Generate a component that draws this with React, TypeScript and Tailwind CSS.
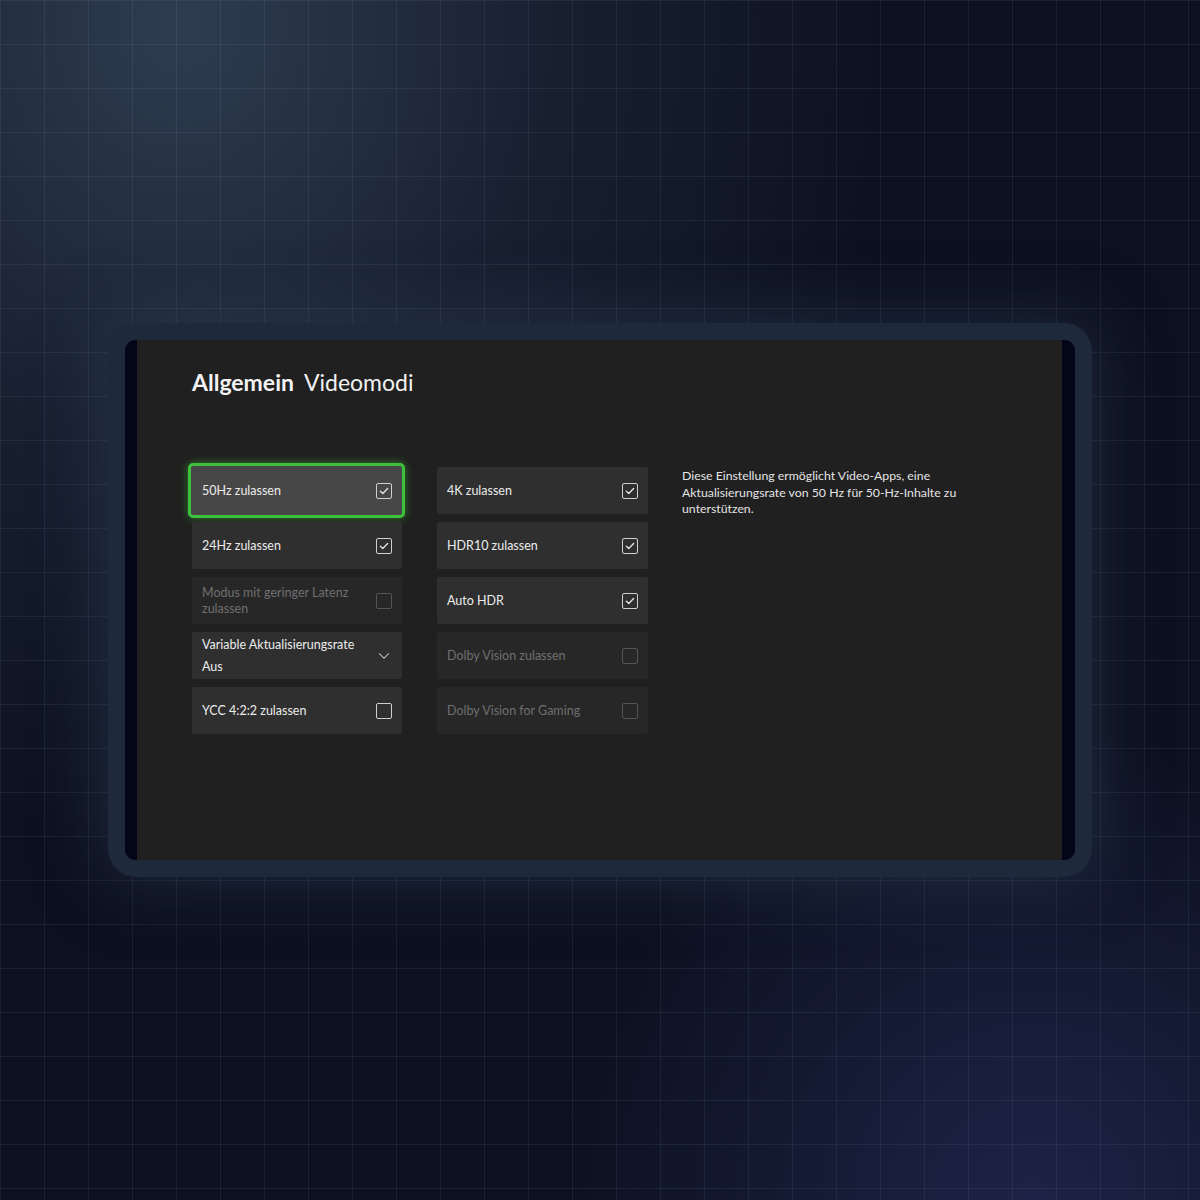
import { ChevronDown } from "lucide-react";

type Item = {
  label: string;
  sub?: string;
  checked?: boolean;
  disabled?: boolean;
  selected?: boolean;
  dropdown?: boolean;
};

const left: Item[] = [
  { label: "50Hz zulassen", checked: true, selected: true },
  { label: "24Hz zulassen", checked: true },
  { label: "Modus mit geringer Latenz zulassen", disabled: true },
  { label: "Variable Aktualisierungsrate", sub: "Aus", dropdown: true },
  { label: "YCC 4:2:2 zulassen" },
];

const right: Item[] = [
  { label: "4K zulassen", checked: true },
  { label: "HDR10 zulassen", checked: true },
  { label: "Auto HDR", checked: true },
  { label: "Dolby Vision zulassen", disabled: true },
  { label: "Dolby Vision for Gaming", disabled: true },
];

const CheckBox = ({ checked, disabled }: { checked?: boolean; disabled?: boolean }) => (
  <div
    className={`w-4 h-4 shrink-0 rounded-[2px] border-[1.5px] flex items-center justify-center ${
      disabled ? "border-[#555555]" : "border-[#cfcfcf]"
    }`}
  >
    {checked && (
      <svg width="12" height="12" viewBox="0 0 12 12" fill="none">
        <path d="M2.4 6.2l2.4 2.3 4.8-5" stroke="#e6e6e6" strokeWidth="1.3" strokeLinecap="round" strokeLinejoin="round" />
      </svg>
    )}
  </div>
);

const Tile = ({ item }: { item: Item }) => {
  const base = item.selected
    ? "-ml-[4px] -mr-[3px] -my-[4px] h-[55px] bg-[#474747] border-[3px] border-[#3ec23e] rounded-[5px] shadow-[0_0_8px_rgba(62,194,62,0.55)] pl-[11px] pr-[10px]"
    : `h-[47px] rounded-[2px] px-[10px] ${item.disabled ? "bg-[#272727]" : "bg-[#2f2f2f]"}`;
  return (
    <div className={`flex items-center justify-between ${base}`}>
      {item.dropdown ? (
        <div className="flex flex-col gap-[5px] text-[12.5px] leading-[17px] text-[#ececec]">
          <span>{item.label}</span>
          <span>{item.sub}</span>
        </div>
      ) : (
        <span
          className={`text-[12.5px] leading-[16px] pr-3 ${
            item.disabled ? "text-[#6f6f6f] max-w-[160px]" : "text-[#ececec]"
          }`}
        >
          {item.label}
        </span>
      )}
      {item.dropdown ? (
        <ChevronDown size={18} strokeWidth={1.4} className="text-[#d8d8d8] -mr-[1px]" />
      ) : (
        <CheckBox checked={item.checked} disabled={item.disabled} />
      )}
    </div>
  );
};

export default function App() {
  return (
    <div
      className="w-full min-h-[1200px] pt-[323px] bg-[#0c1120] bg-[linear-gradient(to_right,rgba(148,163,184,0.1)_1px,transparent_1px),linear-gradient(to_bottom,rgba(148,163,184,0.1)_1px,transparent_1px),radial-gradient(ellipse_at_15%_2%,#2f3d50_0%,rgba(47,61,80,0.35)_25%,rgba(12,17,32,0)_50%),radial-gradient(circle_at_86%_100%,#1d2346_0%,rgba(29,35,70,0)_30%)] bg-[size:44px_44px,44px_44px,100%_100%,100%_100%] bg-[position:0_0,0_0,0_0,0_0]"
      style={{ fontFamily: "Lato, 'Noto Sans', sans-serif" }}
    >
      <div className="mx-auto w-[984px] h-[554px] rounded-[28px] bg-[#1e293b] p-[17px] shadow-[0_0_70px_rgba(51,65,85,0.55)]">
        <div className="h-[520px] rounded-[10px] bg-[#020617] pl-[12px] pr-[13px] flex">
          <div className="flex-1 bg-[#202020] pl-[55px] pt-[26px]">
            <h1 className="flex gap-[10px] text-[23px] leading-[32px] text-[#f2f2f2]">
              <span className="font-bold">Allgemein</span>
              <span className="font-normal">Videomodi</span>
            </h1>
            <div className="mt-[69px] flex items-start">
              <div className="w-[210px] flex flex-col gap-[8px]">
                {left.map((it) => (
                  <Tile key={it.label} item={it} />
                ))}
              </div>
              <div className="ml-[35px] w-[211px] flex flex-col gap-[8px]">
                {right.map((it) => (
                  <Tile key={it.label} item={it} />
                ))}
              </div>
              <p className="ml-[34px] mt-[1px] w-[295px] text-[12.3px] leading-[16.5px] text-[#e4e4e4]">
                Diese Einstellung ermöglicht Video-Apps, eine Aktualisierungsrate von 50 Hz für 50-Hz-Inhalte zu unterstützen.
              </p>
            </div>
          </div>
        </div>
      </div>
    </div>
  );
}
